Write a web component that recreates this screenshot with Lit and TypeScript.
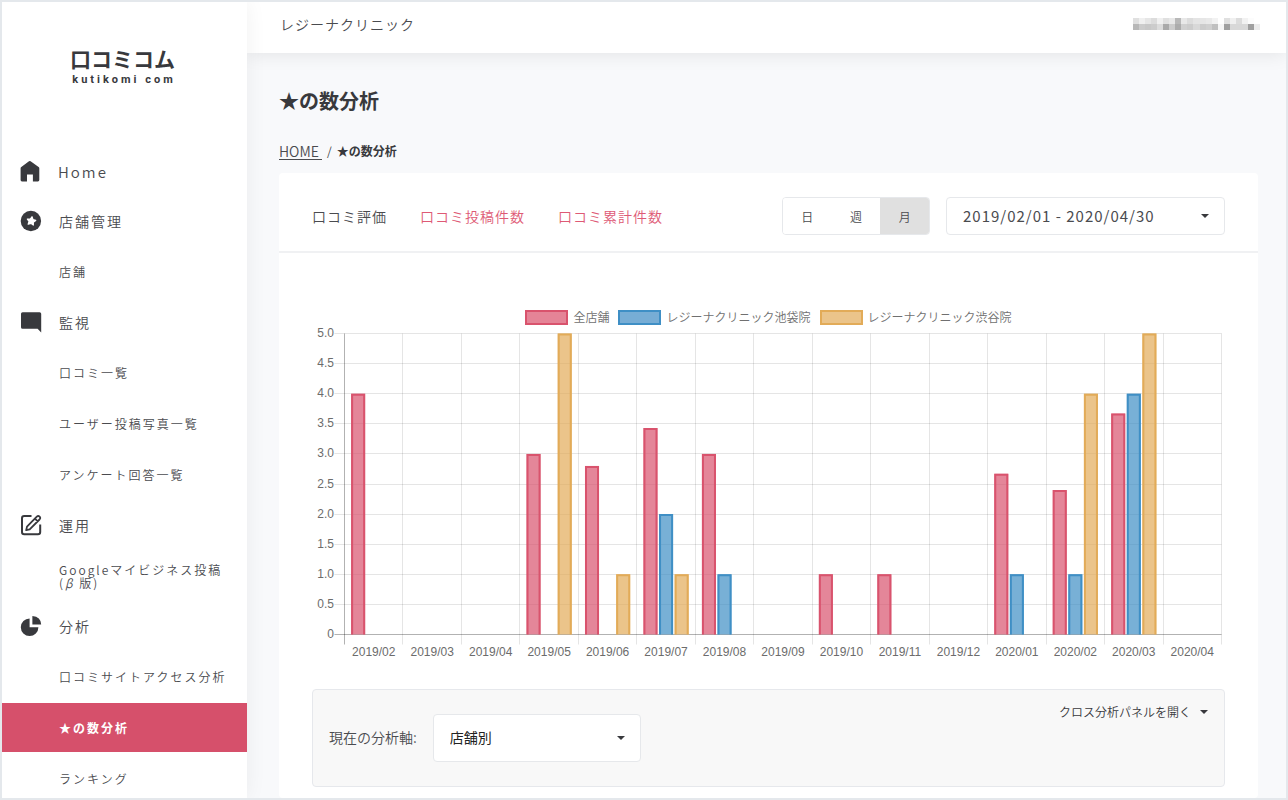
import { LitElement, html, svg, css, nothing } from "lit";
import { customElement, state } from "lit/decorators.js";
import { classMap } from "lit/directives/class-map.js";

type NavItem = { label: unknown; icon?: unknown; latin?: boolean; active?: boolean };

const icons = {
  home: svg`<path d="M2 21.4Q.6 21.4 .6 20V8.2Q.6 7.4 1.3 6.9L9 1.2Q9.8 .6 10.6 1.2L18.6 6.9Q19.3 7.4 19.3 8.2V20Q19.3 21.4 17.9 21.4H12.9V14.6H7V21.4Z" fill="currentColor"/>`,
  star: svg`<circle cx="10.9" cy="11" r="10.2" fill="currentColor"/><path d="M12 6.8L12.9 9.5 15.7 10.4 13.3 12.1 13.3 15 10.9 13.3 8.2 14.2 9.1 11.4 7.4 9.1 10.3 9.1Z" fill="#fff" stroke="#fff" stroke-width="1.3" stroke-linejoin="round"/>`,
  comment: svg`<path d="M2.6 1.2H19.6Q21.2 1.2 21.2 2.8V21.4L17.6 17.8H2.6Q1 17.8 1 16.2V2.8Q1 1.2 2.6 1.2Z" fill="currentColor"/>`,
  edit: svg`<path d="M11.5 2H4.2Q2 2 2 4.2V18Q2 20.2 4.2 20.2H18Q20.2 20.2 20.2 18V10.5" fill="none" stroke="currentColor" stroke-width="2"/><path d="M6.2 16.2L7 12.6 16.8 2.7Q18.2 1.3 19.6 2.6 20.9 4 19.5 5.5L9.7 15.4ZM15 4.6L17.7 7.3" fill="none" stroke="currentColor" stroke-width="1.8" stroke-linejoin="round"/>`,
  pie: svg`<path d="M9.6 3.4V12.2H18.4A8.8 8.8 0 1 1 9.6 3.4Z" fill="currentColor"/><path d="M12.4 1V9.6H21.2Q20.8 1.6 12.4 1Z" fill="currentColor"/>`,
};

const navItems: NavItem[] = [
  { label: "Home", icon: icons.home, latin: true },
  { label: "店舗管理", icon: icons.star },
  { label: "店舗" },
  { label: "監視", icon: icons.comment },
  { label: "口コミ一覧" },
  { label: "ユーザー投稿写真一覧" },
  { label: "アンケート回答一覧" },
  { label: "運用", icon: icons.edit },
  { label: html`Googleマイビジネス投稿<br />(<i>β</i> 版)` },
  { label: "分析", icon: icons.pie },
  { label: "口コミサイトアクセス分析" },
  { label: "★の数分析", active: true },
  { label: "ランキング" },
];

const series = [
  { name: "全店舗", tone: "rose", values: [4, 0, 0, 3, 2.8, 3.43, 3, 0, 1, 1, 0, 2.67, 2.4, 3.67, 0] },
  { name: "レジーナクリニック池袋院", tone: "blue", values: [0, 0, 0, 0, 0, 2, 1, 0, 0, 0, 0, 1, 1, 4, 0] },
  { name: "レジーナクリニック渋谷院", tone: "amber", values: [0, 0, 0, 5, 1, 1, 0, 0, 0, 0, 0, 0, 4, 5, 0] },
];

const months = [
  "2019/02", "2019/03", "2019/04", "2019/05", "2019/06", "2019/07", "2019/08", "2019/09",
  "2019/10", "2019/11", "2019/12", "2020/01", "2020/02", "2020/03", "2020/04",
];

const caret = html`<svg class="caret" viewBox="0 0 10 6" aria-hidden="true"><path d="M1 1H9L5 5Z" fill="currentColor" /></svg>`;

@customElement("side-nav")
class SideNav extends LitElement {
  static styles = css`
    :host {
      display: block;
      overflow-y: auto;
      scrollbar-width: none;
      background: #fff;
      color: #38393d;
    }
    .logo {
      display: flex;
      flex-direction: column;
      align-items: center;
      padding: 42px 4px 58px 0;
      text-decoration: none;
      color: inherit;
      font-weight: 700;
    }
    .logo-name { font-size: 21px; line-height: 28px; }
    .logo-sub {
      font: 700 11px/16px Roboto, sans-serif;
      letter-spacing: 3px;
      padding-left: 3px;
    }
    .list { list-style: none; margin: 0; padding: 0; }
    .row { padding: 1px 0; }
    .link {
      display: flex;
      align-items: center;
      gap: 17px;
      box-sizing: border-box;
      height: 49px;
      padding: 0 16px 0 57px;
      color: inherit;
      text-decoration: none;
      font-size: 12px;
      line-height: 13px;
      letter-spacing: 2px;
      white-space: nowrap;
    }
    .text { color: #4a4b4f; }
    .group { padding: 0; }
    .group .link { height: 50px; padding: 0 16px 0 18px; font-size: 14px; }
    .latin .link { font-size: 15px; gap: 16px; }
    .active .link { background: #d6506b; font-weight: 700; }
    .active .text { color: #fff; }
    .icon { width: 22px; height: 22px; flex: none; }
  `;

  render() {
    return html`
      <a class="logo" href="#"><span class="logo-name">口コミコム</span><span class="logo-sub">kutikomi com</span></a>
      <nav>
        <ul class="list">
          ${navItems.map(
            (item) => html`<li class=${classMap({ row: true, group: !!item.icon, latin: !!item.latin, active: !!item.active })}>
              <a class="link" href="#" aria-current=${item.active ? "page" : nothing}>
                ${item.icon ? html`<svg class="icon" viewBox="0 0 22 22" aria-hidden="true">${item.icon}</svg>` : nothing}
                <span class="text">${item.label}</span>
              </a>
            </li>`
          )}
        </ul>
      </nav>
    `;
  }
}

@customElement("rating-chart")
class RatingChart extends LitElement {
  static styles = css`
    :host { display: block; }
    .legend {
      display: flex;
      flex-wrap: wrap;
      justify-content: center;
      gap: 9px;
      list-style: none;
      margin: 0;
      padding: 0;
      font-size: 12px;
      line-height: 16px;
      color: #707070;
    }
    .key { display: flex; align-items: center; gap: 5px; }
    .swatch { box-sizing: border-box; width: 43px; height: 15px; border: 2px solid; }
    .swatch.rose { background: #e58497; border-color: #d9536d; }
    .swatch.blue { background: #77add5; border-color: #3f8fc5; }
    .swatch.amber { background: #ebc48a; border-color: #e2ab58; }
    .plot { display: block; width: 100%; height: auto; }
    .tick { font: 12px "Liberation Sans", sans-serif; fill: #6c6c6c; }
    .grid { stroke: rgba(0, 0, 0, 0.1); }
    .axis { stroke: rgba(0, 0, 0, 0.3); }
    .fill.rose { fill: rgba(217, 83, 109, 0.7); }
    .fill.blue { fill: rgba(63, 143, 197, 0.7); }
    .fill.amber { fill: rgba(226, 171, 88, 0.7); }
    .edge { fill: none; stroke-width: 2; }
    .edge.rose { stroke: #d9536d; }
    .edge.blue { stroke: #3f8fc5; }
    .edge.amber { stroke: #e2ab58; }
  `;

  render() {
    const left = 32.5;
    const right = 909.5;
    const top = 8.5;
    const base = 309.5;
    const step = (right - left) / months.length;
    const slot = (step * 0.8) / series.length;
    const barWidth = slot * 0.9;
    const yOf = (v: number) => base - (v / 5) * (base - top);
    const snap = (n: number) => Math.floor(n) + 0.5;
    const levels = Array.from({ length: 11 }, (_, i) => i / 2);

    return html`
      <ul class="legend">
        ${series.map((s) => html`<li class="key"><span class="swatch ${s.tone}"></span>${s.name}</li>`)}
      </ul>
      <svg class="plot" viewBox="0 0 913 334" role="img" aria-label="★の数分析">
        ${levels.map(
          (v) => svg`
            <line class=${v ? "grid" : "axis"} x1=${left - 10} x2=${right} y1=${snap(yOf(v))} y2=${snap(yOf(v))} />
            <text class="tick" x="22" y=${snap(yOf(v)) + 3.5} text-anchor="end">${v ? v.toFixed(1) : "0"}</text>`
        )}
        ${[...months, ""].map(
          (_, i) => svg`<line class=${i ? "grid" : "axis"} x1=${snap(left + i * step)} x2=${snap(left + i * step)} y1=${top} y2=${base + 10} />`
        )}
        ${months.map((m, i) => svg`<text class="tick" x=${left + (i + 0.5) * step} y="331" text-anchor="middle">${m}</text>`)}
        ${series.map((s, k) =>
          s.values.map((v, i) => {
            if (!v) return nothing;
            const x = left + i * step + step * 0.1 + k * slot + slot * 0.05;
            const y = yOf(v);
            return svg`
              <rect class="fill ${s.tone}" x=${x} y=${y} width=${barWidth} height=${base - y} />
              <path class="edge ${s.tone}" d="M${x + 1} ${base}V${y + 1}H${x + barWidth - 1}V${base}" />`;
          })
        )}
      </svg>
    `;
  }
}

@customElement("app-root")
class AppRoot extends LitElement {
  @state() private unit = "月";

  static styles = css`
    :host {
      display: grid;
      grid-template-columns: 245px minmax(0, 1fr);
      box-sizing: border-box;
      height: 100vh;
      border: 2px solid #e4e8ec;
      overflow: hidden;
      background: #f8f9fb;
      color: #4a4b4f;
      font-family: "Noto Sans CJK JP", sans-serif;
      font-weight: 350;
      font-size: 14px;
    }
    .side { z-index: 2; box-shadow: 0 0 20px rgba(0, 0, 0, 0.06); }
    .page { display: flex; flex-direction: column; min-width: 0; min-height: 0; }
    .top {
      display: flex;
      align-items: center;
      justify-content: space-between;
      box-sizing: border-box;
      height: 52px;
      padding: 0 26px 8px 33px;
      background: #fff;
      box-shadow: 0 0 20px rgba(0, 0, 0, 0.1);
      letter-spacing: 1px;
    }
    .account { width: 127px; height: 12px; }
    .main { display: flex; flex-direction: column; flex: 1; padding: 33px 28px 0 32px; }
    .title { margin: 0; font-size: 20px; line-height: 30px; font-weight: 700; color: #38393d; }
    .crumbs {
      display: flex;
      gap: 5px;
      margin: 26px 0 13px;
      font-size: 12px;
      line-height: 18px;
      color: #38393d;
    }
    .crumbs a { color: #4a4b4f; font-size: 14px; white-space: pre; text-underline-offset: 2px; }
    .crumbs strong { font-weight: 700; }
    .card { display: flex; flex-direction: column; flex: 1; background: #fff; border-radius: 4px; }
    .card-head {
      display: flex;
      align-items: center;
      gap: 16px;
      padding: 24px 33px 16px;
      border-bottom: 2px solid #f0f1f3;
    }
    .tabs { display: flex; flex: 1; gap: 33px; letter-spacing: 1px; white-space: nowrap; }
    .tab { color: #de5a75; text-decoration: none; }
    .tab.current { color: #4a4b4f; }
    .units {
      display: flex;
      box-sizing: border-box;
      width: 148px;
      height: 38px;
      border: 1px solid #e6e8eb;
      border-radius: 4px;
      overflow: hidden;
    }
    .unit {
      flex: 1;
      padding: 0;
      border: 0;
      background: #fff;
      color: inherit;
      font: inherit;
      font-size: 12px;
    }
    .unit.on { background: #e0e0e0; }
    .picker { display: grid; align-items: center; color: #38393d; }
    .picker > * { grid-area: 1 / 1; }
    .picker .caret { justify-self: end; margin-right: 15px; pointer-events: none; }
    .caret { width: 10px; height: 6px; }
    .select {
      appearance: none;
      box-sizing: border-box;
      width: 208px;
      height: 48px;
      padding: 0 16px 3px;
      border: 1px solid #e6e8eb;
      border-radius: 4px;
      background: #fff;
      color: #222;
      font: inherit;
      font-weight: 400;
    }
    .range .select {
      width: 279px;
      height: 38px;
      padding-bottom: 1px;
      color: #4a4b4f;
      font-size: 15px;
      letter-spacing: 1px;
    }
    .card-body { display: flex; flex-direction: column; gap: 30px; padding: 56px 33px 11px; }
    .panel {
      display: flex;
      align-items: center;
      justify-content: space-between;
      box-sizing: border-box;
      min-height: 98px;
      padding: 0 15px 0 16px;
      background: #f8f8f8;
      border: 1px solid #e6e8ec;
      border-radius: 4px;
    }
    .axis-field { display: flex; align-items: center; gap: 16px; }
    .axis-field label { padding-bottom: 3px; }
    .toggle {
      display: flex;
      align-items: center;
      gap: 8px;
      align-self: flex-start;
      padding: 14px 0;
      border: 0;
      background: none;
      color: #38393d;
      font: inherit;
      font-size: 12px;
      line-height: 16px;
    }
  `;

  private renderAccount() {
    const rows = [
      ["e0", "f0", "e6", "dc", "f0", "e0", "e8", "b8", "e8", "dc", "e4", "e6", "e9", "f2", "ff", "e0", "f0", "dc", "f2", "fc", "ff"],
      ["b8", "cc", "c8", "cc", "dc", "aa", "cc", "ac", "d0", "cc", "d8", "cc", "d0", "c0", "f6", "a0", "d8", "d8", "d8", "a0", "ec"],
    ];
    return html`<svg class="account" viewBox="0 0 126 12" preserveAspectRatio="none" shape-rendering="crispEdges" aria-hidden="true">
      ${rows.map((row, y) => row.map((c, x) => svg`<rect x=${x * 6} y=${y * 6} width="6" height="6" fill="#${c}${c}${c}" />`))}
    </svg>`;
  }

  render() {
    return html`
      <side-nav class="side"></side-nav>
      <div class="page">
        <header class="top"><span>レジーナクリニック</span>${this.renderAccount()}</header>
        <main class="main">
          <h1 class="title">★の数分析</h1>
          <nav class="crumbs"><a href="#">HOME </a><span>/</span><strong>★の数分析</strong></nav>
          <section class="card">
            <div class="card-head">
              <nav class="tabs">
                <a class="tab current" href="#">口コミ評価</a>
                <a class="tab" href="#">口コミ投稿件数</a>
                <a class="tab" href="#">口コミ累計件数</a>
              </nav>
              <div class="units">
                ${["日", "週", "月"].map(
                  (u) => html`<button type="button" class=${classMap({ unit: true, on: u === this.unit })}
                    aria-pressed=${u === this.unit} @click=${() => (this.unit = u)}>${u}</button>`
                )}
              </div>
              <div class="picker range">
                <select class="select" aria-label="期間"><option>2019/02/01 - 2020/04/30</option></select>
                ${caret}
              </div>
            </div>
            <div class="card-body">
              <rating-chart></rating-chart>
              <div class="panel">
                <div class="axis-field">
                  <label for="axis">現在の分析軸:</label>
                  <div class="picker">
                    <select class="select" id="axis"><option>店舗別</option></select>
                    ${caret}
                  </div>
                </div>
                <button type="button" class="toggle">クロス分析パネルを開く ${caret}</button>
              </div>
            </div>
          </section>
        </main>
      </div>
    `;
  }
}
